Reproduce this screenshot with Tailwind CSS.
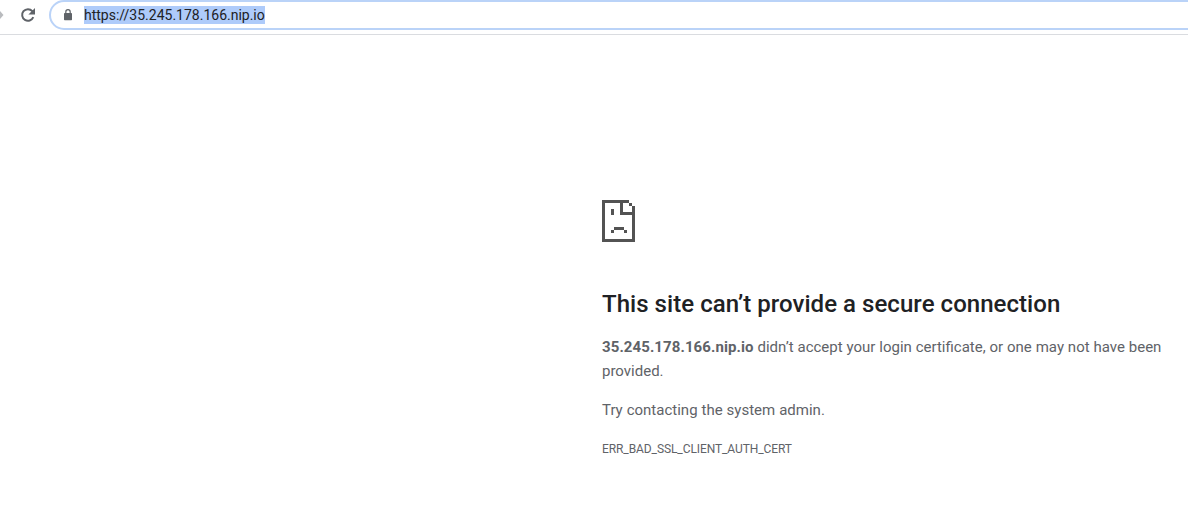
<!DOCTYPE html>
<html lang="en"><head><meta charset="utf-8"><title>Privacy error</title>
<script src="https://cdn.jsdelivr.net/npm/@tailwindcss/browser@4"></script></head>
<body class="h-[530px] overflow-hidden bg-white font-[Roboto,sans-serif] text-[#5f6368]">
<header class="flex h-[35px] items-start overflow-hidden border-b border-[#dadce0]">
<svg class="h-[30px] w-[4px] shrink-0" viewBox="0 0 4 30"><path d="M0 11L3.5 15L0 19Z" fill="#b9bbbe"/></svg>
<svg class="ml-[14px] mt-[5px] size-5 shrink-0" viewBox="0 0 20 20" fill="none"><path d="M15.3 12.2A5.8 5.8 0 1 1 14.3 6.1L15.6 7.6" stroke="#5f6368" stroke-width="2"/><path d="M17 3v6.6h-6.6z" fill="#5f6368"/></svg>
<div class="ml-[11px] flex h-[30px] w-[1200px] shrink-0 items-center rounded-l-full border-2 border-[#bad3f8] pl-[11px]">
<svg class="size-3 shrink-0" viewBox="0 0 12 12" fill="#5f6368"><rect x="2" y="4" width="8" height="7.2" rx=".7"/><path d="M3.8 5V2.9a2.2 2.2 0 0 1 4.4 0V5" fill="none" stroke="#5f6368" stroke-width="1.2"/></svg>
<span class="ml-[10px] bg-[#aecbfa] text-sm leading-[18px] text-[#202124]">https://35.245.178.166.nip.io</span>
</div></header>
<main class="ml-[602px] w-[586px] pt-[165px] text-[15px] leading-6">
<svg class="h-[42px] w-[33px]" viewBox="0 0 33 42" fill="#535353" shape-rendering="crispEdges"><path d="M0 0h27v3H3v36h27V6h3v36H0zM18 3h3v9h9v3H18zM27 3h3v3h-3zM9 9h3v6H9zM12 27h10v3H12zM9 30h3v3H9zM22 30h3v3h-3z"/></svg>
<h1 class="mt-[47px] text-2xl leading-[30px] font-medium tracking-[0.045px] text-[#202124]">This site can’t provide a secure connection</h1>
<p class="mt-4 w-[575px] [word-spacing:0.15px]"><b class="tracking-[0.09px]">35.245.178.166.nip.io</b> didn’t accept your login certificate, or one may not have been provided.</p>
<p class="mt-[15px] [word-spacing:0.25px]">Try contacting the system admin.</p>
<p class="mt-[15px] text-xs leading-6 tracking-[-0.09px]">ERR_BAD_SSL_CLIENT_AUTH_CERT</p>
</main></body></html>
